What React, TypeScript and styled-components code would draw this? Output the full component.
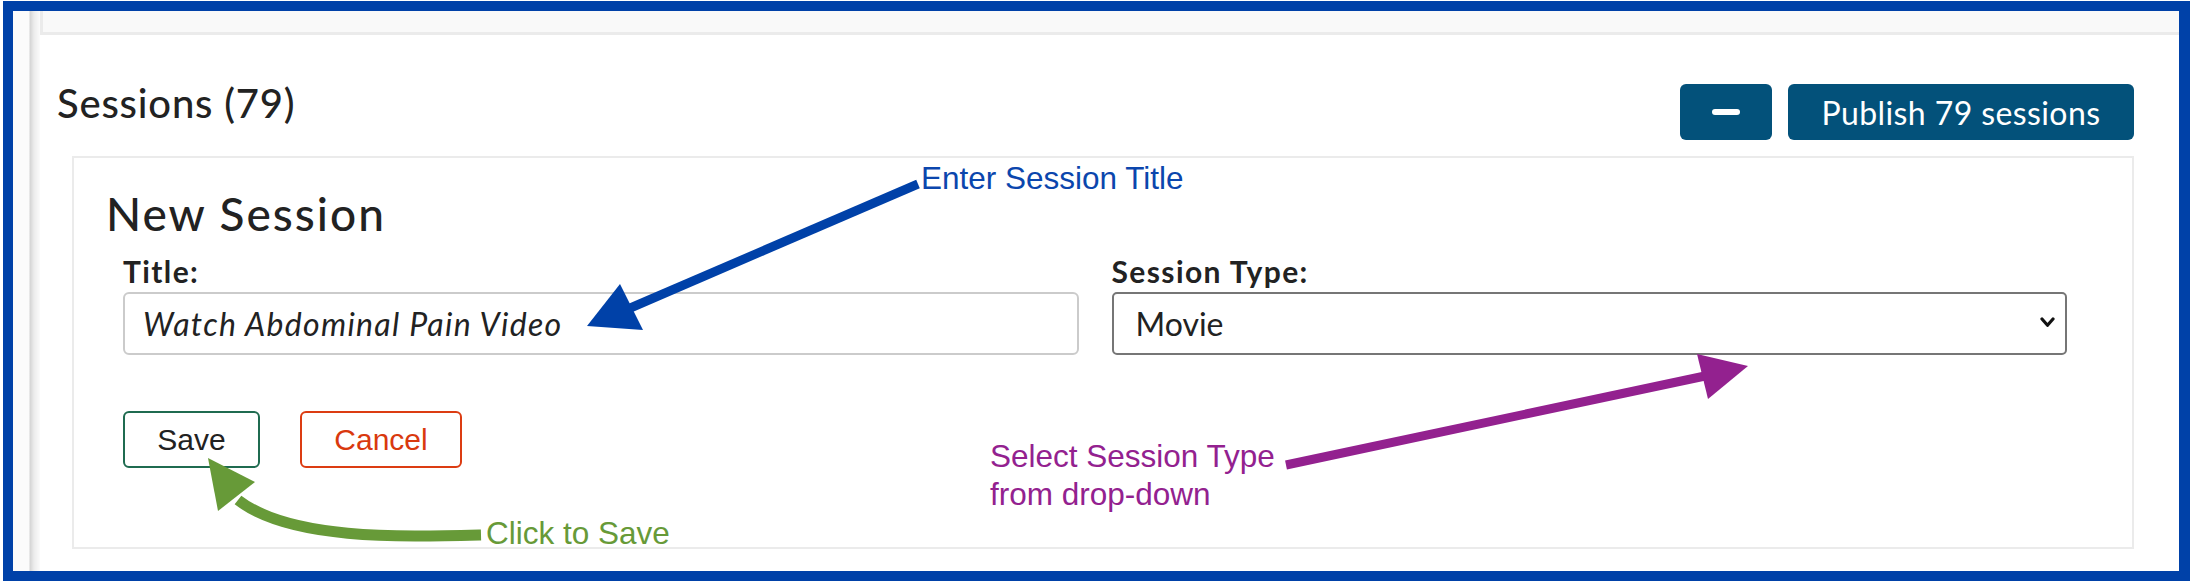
import React from "react";
import styled, { createGlobalStyle } from "styled-components";

const GlobalStyle = createGlobalStyle`
  html, body { margin: 0; padding: 0; background: #ffffff; }
  body { font-family: Lato, "Noto Sans", sans-serif; color: #222222; }
  * { box-sizing: border-box; }
`;

const Root = styled.div`
  position: relative;
  width: 2190px;
  height: 582px;
  overflow: hidden;
  background: #ffffff;
`;

const Frame = styled.div`
  margin: 1px 0 1px 3px;
  height: 580px;
  border: 10px solid #0041a8;
  border-right-width: 11px;
  display: flex;
  background: #ffffff;
`;

const Gutter = styled.div`
  width: 27px;
  flex: none;
  background: linear-gradient(
    to right,
    #fbfbfb 0px,
    #fbfbfb 16px,
    #d4d4d4 17px,
    #ececec 21px,
    #fbfbfb 27px
  );
`;

const Main = styled.div`
  flex: 1;
  display: flex;
  flex-direction: column;
  min-width: 0;
`;

const PrevCardEdge = styled.div`
  height: 24px;
  background: #f9f9f9;
  border-left: 3px solid #ebebeb;
  border-bottom: 3px solid #ebebeb;
`;

const Section = styled.section`
  padding: 0 45px 0 14px;
`;

const Header = styled.div`
  margin-top: 43px;
  display: flex;
  justify-content: space-between;
  align-items: flex-start;
`;

const SectionTitle = styled.h3`
  margin: 1px 0 0 3px;
  font-size: 40px;
  line-height: 48px;
  font-weight: 500;
  letter-spacing: 0.8px;
  color: #222222;
`;

const HeaderActions = styled.div`
  margin-top: 6px;
  display: flex;
  gap: 16px;
`;

const PrimaryButton = styled.button<{ $w?: number }>`
  height: 56px;
  ${(p) => (p.$w ? `width: ${p.$w}px;` : "padding: 0 32px;")}
  border: none;
  border-radius: 6px;
  background: #03517a;
  color: #ffffff;
  font-family: Lato, "Noto Sans", sans-serif;
  font-size: 32px;
  letter-spacing: 0.4px;
  display: flex;
  align-items: center;
  justify-content: center;
`;

const MinusBar = styled.span`
  width: 28px;
  height: 6px;
  border-radius: 3px;
  background: #ffffff;
`;

const Card = styled.div`
  margin: 16px 0 0 18px;
  border: 2px solid #ebebeb;
  padding: 28px 65px 79px 30px;
`;

const CardTitle = styled.h2`
  margin: 0 0 0 2px;
  font-size: 46px;
  line-height: 55px;
  font-weight: 500;
  letter-spacing: 2px;
  color: #222222;
`;

const FormGrid = styled.div`
  margin: 12px 0 0 19px;
  display: grid;
  grid-template-columns: 1fr 1fr;
  column-gap: 33px;
`;

const Field = styled.div`
  display: flex;
  flex-direction: column;
`;

const Label = styled.label`
  font-size: 30px;
  line-height: 36px;
  font-weight: 700;
  letter-spacing: 1.4px;
  color: #222222;
  margin-bottom: 3px;
`;

const TextInput = styled.input`
  height: 63px;
  width: 100%;
  border: 2px solid #cbcbcb;
  border-radius: 6px;
  padding: 0 18px;
  font-family: Lato, "Noto Sans", sans-serif;
  font-size: 32px;
  font-style: italic;
  letter-spacing: 1.3px;
  color: #222222;
  background: #ffffff;
  outline: none;
`;

const SelectWrap = styled.div`
  position: relative;
  height: 63px;
`;

const Select = styled.select`
  appearance: none;
  -webkit-appearance: none;
  width: 100%;
  height: 63px;
  border: 2px solid #767676;
  border-radius: 5px;
  padding: 0 22px;
  font-family: Lato, "Noto Sans", sans-serif;
  font-size: 32px;
  color: #222222;
  background: #ffffff;
  outline: none;
`;

const Chevron = styled.svg`
  position: absolute;
  right: 12px;
  top: 25px;
  width: 15px;
  height: 11px;
  pointer-events: none;
`;

const Actions = styled.div`
  margin: 56px 0 0 19px;
  display: flex;
  gap: 40px;
`;

const OutlineButton = styled.button<{ $tone: "save" | "cancel"; $w: number }>`
  width: ${(p) => p.$w}px;
  height: 57px;
  border-radius: 6px;
  background: #ffffff;
  border: 2px solid ${(p) => (p.$tone === "save" ? "#1f6b50" : "#dc3c12")};
  color: ${(p) => (p.$tone === "save" ? "#222222" : "#d9390e")};
  font-family: "Liberation Sans", Arial, sans-serif;
  font-size: 30px;
`;

const Overlay = styled.svg`
  position: absolute;
  left: 0;
  top: 0;
  width: 2190px;
  height: 582px;
  pointer-events: none;
`;

const Note = styled.div<{ $color: string; $x: number; $y: number }>`
  position: absolute;
  left: ${(p) => p.$x}px;
  top: ${(p) => p.$y}px;
  color: ${(p) => p.$color};
  font-family: "Liberation Sans", Arial, sans-serif;
  font-size: 31.5px;
  line-height: 38px;
  white-space: nowrap;
`;

export default function App() {
  return (
    <Root>
      <GlobalStyle />
      <Frame>
        <Gutter />
        <Main>
          <PrevCardEdge />
          <Section>
            <Header>
              <SectionTitle>Sessions (79)</SectionTitle>
              <HeaderActions>
                <PrimaryButton $w={92} aria-label="Collapse">
                  <MinusBar />
                </PrimaryButton>
                <PrimaryButton $w={346}>Publish 79 sessions</PrimaryButton>
              </HeaderActions>
            </Header>
            <Card>
              <CardTitle>New Session</CardTitle>
              <FormGrid>
                <Field>
                  <Label>Title:</Label>
                  <TextInput defaultValue="Watch Abdominal Pain Video" />
                </Field>
                <Field>
                  <Label>Session Type:</Label>
                  <SelectWrap>
                    <Select defaultValue="movie">
                      <option value="movie">Movie</option>
                      <option value="reading">Reading</option>
                      <option value="quiz">Quiz</option>
                    </Select>
                    <Chevron viewBox="0 0 15 11">
                      <path d="M2 2 L7.5 8.2 L13 2" fill="none" stroke="#111" strokeWidth="3.2" strokeLinecap="round" strokeLinejoin="round" />
                    </Chevron>
                  </SelectWrap>
                </Field>
              </FormGrid>
              <Actions>
                <OutlineButton $tone="save" $w={137}>Save</OutlineButton>
                <OutlineButton $tone="cancel" $w={162}>Cancel</OutlineButton>
              </Actions>
            </Card>
          </Section>
        </Main>
      </Frame>

      <Overlay viewBox="0 0 2190 582">
        <line x1="918" y1="184" x2="628" y2="309" stroke="#0041a8" strokeWidth="9" />
        <polygon points="587,326 620,284 643,330" fill="#0041a8" />
        <line x1="1286" y1="465" x2="1705" y2="376" stroke="#93218f" strokeWidth="9" />
        <polygon points="1748,366 1697,354 1708,399" fill="#93218f" />
        <path d="M481 535 C 400 537 290 540 238 500" fill="none" stroke="#679a38" strokeWidth="11" />
        <polygon points="208,458 255,482 218,511" fill="#679a38" />
      </Overlay>
      <Note $color="#0b46ad" $x={921} $y={159}>Enter Session Title</Note>
      <Note $color="#93218f" $x={990} $y={437}>
        Select Session Type
        <br />
        from drop-down
      </Note>
      <Note $color="#679a38" $x={486} $y={514}>Click to Save</Note>
    </Root>
  );
}
